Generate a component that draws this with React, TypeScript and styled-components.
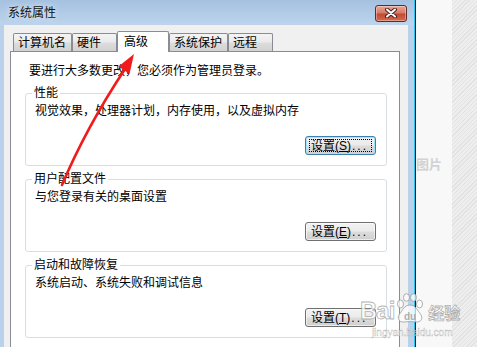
import React from 'react'
import styled, { createGlobalStyle } from 'styled-components'
// ______________________________________________________
//
const GlobalStyle = createGlobalStyle`
  html, body {
    margin: 0;
    padding: 0;
  }
  body {
    font-family: "Liberation Sans", "Noto Sans CJK SC", sans-serif;
    font-size: 12px;
    color: #000;
    background: #f8f8f8;
  }
`
// ______________________________________________________
//
const Page = styled.div`
  position: relative;
  display: flex;
  width: 477px;
  height: 347px;
  overflow: hidden;
`

const Window = styled.div`
  flex: none;
  width: 414px;
  display: flex;
  flex-direction: column;
  background: #b9d1ea;
`

const TitleBar = styled.div`
  flex: none;
  height: 25px;
  box-sizing: border-box;
  display: flex;
  align-items: center;
  justify-content: space-between;
  padding: 1px 7px 0 8px;
  background: linear-gradient(#a5c1e0, #bdd4ec);
`

const Title = styled.span`
  line-height: 14px;
  color: #111;
  text-shadow: 0 0 6px rgba(255, 255, 255, 0.9);
`

const CloseButton = styled.div`
  width: 32px;
  height: 17px;
  box-sizing: border-box;
  display: flex;
  align-items: center;
  justify-content: center;
  border: 1px solid #5e2a2a;
  border-radius: 3px;
  background: linear-gradient(#e9a695 0%, #d97b66 45%, #c24a33 55%, #d46a4f 100%);
  box-shadow: inset 0 0 0 1px rgba(255, 255, 255, 0.35);
`

const Body = styled.div`
  flex: 1;
  display: flex;
  flex-direction: column;
  margin: 0 6px 0 4px;
  padding: 6px 8px 0 6px;
  background: #f0f0f0;
`

const TabRow = styled.div`
  flex: none;
  height: 20px;
  display: flex;
  align-items: flex-end;
  padding-left: 3px;
`

const Tab = styled.div<{ $active?: boolean }>`
  box-sizing: border-box;
  height: ${(p) => (p.$active ? 21 : 18)}px;
  min-width: ${(p) => (p.$active ? 52 : 45)}px;
  padding: ${(p) => (p.$active ? '0 6px 1px 6px' : '0 5px 0 4px')};
  margin-bottom: ${(p) => (p.$active ? -1 : 0)}px;
  position: relative;
  z-index: ${(p) => (p.$active ? 1 : 0)};
  display: flex;
  align-items: center;
  line-height: 14px;
  border: 1px solid #898c95;
  border-bottom: none;
  border-radius: 2px 2px 0 0;
  background: ${(p) =>
    p.$active
      ? '#fff'
      : 'linear-gradient(#f4f4f4 0%, #ebebeb 45%, #dcdcdc 55%, #d2d2d2 100%)'};
`

const Panel = styled.div`
  flex: 1;
  display: flex;
  flex-direction: column;
  padding: 12px 12px 0 14px;
  background: #fff;
  border: 1px solid #898c95;
  border-bottom: none;
`

const Intro = styled.div`
  line-height: 14px;
  padding-left: 4px;
  margin-bottom: 15px;
`

const Groups = styled.div`
  display: flex;
  flex-direction: column;
  gap: 13px;
`

const GroupBox = styled.div`
  display: flex;
  flex-direction: column;
  padding: 0 10px 10px 9px;
  border: 1px solid #d5dfe5;
  border-radius: 3px;
`

const GroupTitle = styled.span`
  align-self: flex-start;
  margin: -8px 0 0 -3px;
  padding: 0 2px;
  line-height: 14px;
  background: #fff;
`

const Description = styled.div`
  margin-top: 4px;
  line-height: 14px;
`

const ButtonRow = styled.div`
  display: flex;
  justify-content: flex-end;
  margin-top: 18px;
`

const Button = styled.div<{ $focused?: boolean }>`
  position: relative;
  width: 71px;
  height: 19px;
  box-sizing: border-box;
  display: flex;
  align-items: center;
  padding-left: 5px;
  line-height: 14px;
  border: 1px solid ${(p) => (p.$focused ? '#3c7fb1' : '#707070')};
  border-radius: 3px;
  background: linear-gradient(#f2f2f2 0%, #ebebeb 48%, #dddddd 52%, #cfcfcf 100%);
  box-shadow: ${(p) =>
    p.$focused ? 'inset 0 0 0 1px #a7e3f8' : 'inset 0 0 0 1px rgba(255, 255, 255, 0.6)'};

  &::after {
    content: '';
    display: ${(p) => (p.$focused ? 'block' : 'none')};
    position: absolute;
    inset: 2px 3px;
    border: 1px dotted #000;
  }

  .dots {
    letter-spacing: 2px;
    margin-left: 1px;
  }
`

const Divider = styled.div`
  flex: none;
  width: 2px;
  background: linear-gradient(to right, #2ec4ee 50%, #1b1b1b 50%);
`

const Strip = styled.div`
  flex: none;
  width: 36px;
  background: #f8f8f8;
  padding-top: 157px;
  box-sizing: border-box;
`

const StripText = styled.span`
  font-family: "Noto Sans CJK SC", sans-serif;
  font-size: 13px;
  line-height: 14px;
  color: #d2d2d2;
  font-weight: bold;
`

const Pattern = styled.div`
  flex: 1;
  background: repeating-linear-gradient(
    135deg,
    #e2e2e2 0px,
    #e2e2e2 1px,
    #eeeeee 1px,
    #eeeeee 3px
  );
`

const Overlay = styled.svg`
  position: absolute;
  left: 0;
  top: 0;
  pointer-events: none;
`

const Watermark = styled.div`
  position: absolute;
  left: 360px;
  top: 293px;
  display: flex;
  flex-direction: column;
  align-items: center;
  pointer-events: none;
  color: rgba(255, 255, 255, 0.75);
  -webkit-text-stroke: 0.8px rgba(150, 150, 150, 0.75);
`

const LogoLine = styled.div`
  display: flex;
  align-items: flex-end;
  gap: 2px;
`

const LogoWord = styled.span`
  font-family: "Liberation Sans", sans-serif;
  font-weight: bold;
  font-size: 24px;
  line-height: 24px;
  letter-spacing: -1px;
`

const LogoCn = styled.span`
  font-family: "Noto Sans CJK SC", sans-serif;
  font-weight: bold;
  font-size: 16px;
  line-height: 22px;
  margin-left: 2px;
`

const Site = styled.span`
  font-family: "Liberation Sans", sans-serif;
  font-size: 10px;
  line-height: 10px;
  margin-top: 5px;
  -webkit-text-stroke: 0.4px rgba(150, 150, 150, 0.7);
  margin-left: 4px;
`
// ______________________________________________________
//
const CloseIcon = () => (
  <svg width="14" height="10" viewBox="0 0 14 10">
    <path d="M3 1.5 L11 8.5 M11 1.5 L3 8.5" stroke="#4a2020" strokeWidth="4" strokeLinecap="round" />
    <path d="M3 1.5 L11 8.5 M11 1.5 L3 8.5" stroke="#fff" strokeWidth="2" strokeLinecap="round" />
  </svg>
)

const Paw = () => (
  <svg width="28" height="30" viewBox="0 0 28 30">
    <g fill="rgba(255,255,255,0.75)" stroke="rgba(150,150,150,0.75)" strokeWidth="1">
      <ellipse cx="4.5" cy="11" rx="3" ry="4" />
      <ellipse cx="10.5" cy="4.5" rx="3" ry="3.8" />
      <ellipse cx="17.5" cy="4.5" rx="3" ry="3.8" />
      <ellipse cx="23.5" cy="11" rx="3" ry="4" />
      <path d="M14 12 C8 12 6.5 18 3.5 21 C0.5 25 3 29.5 8 29 C11 28.5 17 28.5 20 29 C25 29.5 27.5 25 24.5 21 C21.5 18 20 12 14 12 Z" />
    </g>
    <text x="14" y="26.5" textAnchor="middle" fontFamily="Liberation Sans, sans-serif" fontWeight="bold" fontSize="10" fill="rgba(160,160,160,0.85)">
      du
    </text>
  </svg>
)

const Arrow = () => (
  <Overlay width="477" height="347" viewBox="0 0 477 347">
    <path d="M62 185 Q86 128 125 69" fill="none" stroke="#f21b1b" strokeWidth="2.6" strokeLinecap="round" />
    <polygon points="134,54 118.5,66.5 129.5,74" fill="#f21b1b" />
  </Overlay>
)
// ______________________________________________________
//
type Group = {
  title: string
  text: string
  key: string
  focused?: boolean
}

const groups: Group[] = [
  { title: '性能', text: '视觉效果，处理器计划，内存使用，以及虚拟内存', key: 'S', focused: true },
  { title: '用户配置文件', text: '与您登录有关的桌面设置', key: 'E' },
  { title: '启动和故障恢复', text: '系统启动、系统失败和调试信息', key: 'T' },
]

const tabs = ['计算机名', '硬件', '高级', '系统保护', '远程']
// ______________________________________________________
//
const App: React.FC = () => (
  <>
    <GlobalStyle />
    <Page>
      <Window>
        <TitleBar>
          <Title>系统属性</Title>
          <CloseButton>
            <CloseIcon />
          </CloseButton>
        </TitleBar>
        <Body>
          <TabRow>
            {tabs.map((t) => (
              <Tab key={t} $active={t === '高级'}>
                {t}
              </Tab>
            ))}
          </TabRow>
          <Panel>
            <Intro>要进行大多数更改，您必须作为管理员登录。</Intro>
            <Groups>
              {groups.map((g) => (
                <GroupBox key={g.title}>
                  <GroupTitle>{g.title}</GroupTitle>
                  <Description>{g.text}</Description>
                  <ButtonRow>
                    <Button $focused={g.focused}>
                      设置(<u>{g.key}</u>)<span className="dots">...</span>
                    </Button>
                  </ButtonRow>
                </GroupBox>
              ))}
            </Groups>
          </Panel>
        </Body>
      </Window>
      <Divider />
      <Strip>
        <StripText>图片</StripText>
      </Strip>
      <Pattern />
      <Arrow />
      <Watermark>
        <LogoLine>
          <LogoWord>Bai</LogoWord>
          <Paw />
          <LogoCn>经验</LogoCn>
        </LogoLine>
        <Site>jingyan.baidu.com</Site>
      </Watermark>
    </Page>
  </>
)
// ______________________________________________________
//
export default App
